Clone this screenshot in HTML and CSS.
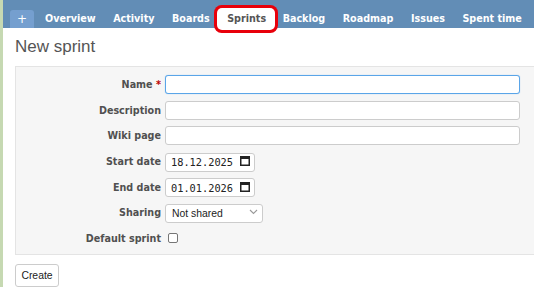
FILE: index.html
```html
<!DOCTYPE html>
<html lang="en">
<head>
  <meta charset="UTF-8" />
  <title>New sprint</title>
  <link rel="stylesheet" href="styles.css">
</head>
<body>

  <div class="page">
    <div class="main-menu">
      <ul class="tabs">
        <li class="tab new-object">+</li>
        <li class="tab">Overview</li>
        <li class="tab">Activity</li>
        <li class="tab">Boards</li>
        <li class="tab selected">Sprints</li>
        <li class="tab">Backlog</li>
        <li class="tab">Roadmap</li>
        <li class="tab">Issues</li>
        <li class="tab">Spent time</li>
      </ul>
    </div>

    <div class="content">
      <h2>New sprint</h2>

      <form class="box tabular">
        <label for="sprint-name">Name <span class="required">*</span></label>
        <input type="text" id="sprint-name" class="wide name-field" />

        <label for="description">Description</label>
        <input type="text" id="description" class="wide" />

        <label for="wiki">Wiki page</label>
        <input type="text" id="wiki" class="wide" />

        <label for="start">Start date</label>
        <div class="date-field">
          <input type="text" id="start" value="18.12.2025" />
          <svg class="cal-icon" width="10" height="11" viewBox="0 0 10 11">
            <rect x="0.75" y="1.75" width="8.5" height="8.5" fill="none" stroke="#222" stroke-width="1.5"/>
            <rect x="0" y="1" width="10" height="3" fill="#222"/>
          </svg>
        </div>

        <label for="end">End date</label>
        <div class="date-field">
          <input type="text" id="end" value="01.01.2026" />
          <svg class="cal-icon" width="10" height="11" viewBox="0 0 10 11">
            <rect x="0.75" y="1.75" width="8.5" height="8.5" fill="none" stroke="#222" stroke-width="1.5"/>
            <rect x="0" y="1" width="10" height="3" fill="#222"/>
          </svg>
        </div>

        <label for="sharing">Sharing</label>
        <div class="select-field">
          <select id="sharing">
            <option>Not shared</option>
          </select>
          <svg class="chevron" width="9" height="6" viewBox="0 0 9 6">
            <path d="M1 1 L4.5 4.5 L8 1" fill="none" stroke="#999" stroke-width="1.1"/>
          </svg>
        </div>

        <label for="default">Default sprint</label>
        <div><input type="checkbox" id="default" class="check" /></div>
      </form>

      <button type="button" class="create">Create</button>
    </div>
  </div>

</body>
</html>
```

FILE: styles.css
```css
/* Reset */
* {
  margin: 0;
  padding: 0;
  box-sizing: border-box;
}

body {
  background: #fff;
  border-left: 3px solid #c6d9b2;
  overflow: hidden;
  font-family: 'DejaVu Sans', Verdana, sans-serif;
  color: #333;
}

.page {
  width: 580px;
}

/* Top menu bar */
.main-menu {
  background: #628db6;
  height: 28px;
  padding-left: 7px;
  display: flex;
  align-items: flex-end;
}

.tabs {
  list-style: none;
  display: flex;
  align-items: flex-end;
  gap: 1.5px;
}

.tab {
  height: 18px;
  line-height: 18px;
  padding: 0 8px;
  font-size: 9.6px;
  font-weight: bold;
  color: #fff;
  border-radius: 3px 3px 0 0;
  white-space: nowrap;
}

.tab.new-object {
  background: #759fcf;
  font-size: 12px;
  font-weight: normal;
  padding: 0 7px;
  margin-right: 1.5px;
}

/* selected tab, with the red highlight frame around it */
.tab.selected {
  position: relative;
  z-index: 1;
  background: #fff;
  color: #555;
  border-radius: 3px;
  padding: 0 7px 0 8px;
  box-shadow: 0 0 0 2px #fff, 0 0 0 5px #e8000b;
}

/* Page content */
.content {
  padding: 9px 0 0 12px;
}

h2 {
  font-family: 'Liberation Sans', Arial, sans-serif;
  font-size: 17px;
  line-height: 20px;
  font-weight: normal;
  color: #555;
  margin-bottom: 9px;
}

.box {
  background: #f6f6f6;
  border: 1px solid #e4e4e4;
  padding: 5px 0 3px 0;
}

.tabular {
  display: grid;
  grid-template-columns: 145px auto;
  grid-auto-rows: 25.6px;
  column-gap: 4px;
  align-items: center;
}

.tabular label {
  text-align: right;
  font-size: 9.6px;
  font-weight: bold;
  color: #505050;
  white-space: nowrap;
}

.required {
  color: #bb0000;
}

input[type="text"],
select {
  height: 19px;
  border: 1px solid #ccc;
  border-radius: 3px;
  background: #fff;
  outline: none;
}

input.wide {
  width: 355px;
}

/* the name field has the blue "active" border */
.tabular input.name-field {
  border-color: #5aa5e8;
  box-shadow: 0 0 1px #8cc0ee;
}

/* Date inputs */
.date-field {
  position: relative;
  width: 90px;
}

.date-field input {
  width: 90px;
  padding: 0 0 0 5px;
  font-family: 'DejaVu Sans Mono', monospace;
  font-size: 10.3px;
  color: #222;
}

.cal-icon {
  position: absolute;
  left: 75px;
  top: 4px;
}

/* Select */
.select-field {
  position: relative;
  width: 98px;
}

.select-field select {
  appearance: none;
  width: 98px;
  padding: 0 0 0 6px;
  font-family: 'Liberation Sans', Arial, sans-serif;
  font-size: 10.4px;
  color: #222;
}

.chevron {
  position: absolute;
  left: 84px;
  top: 7px;
}

.check {
  appearance: none;
  display: block;
  width: 10px;
  height: 10px;
  margin-left: 3px;
  border: 1px solid #767676;
  border-radius: 2px;
  background: #fff;
}

.create {
  margin-top: 9px;
  width: 44px;
  height: 23px;
  background: #fff;
  border: 1px solid #ccc;
  border-radius: 3px;
  font-family: 'Liberation Sans', Arial, sans-serif;
  font-size: 10.4px;
  color: #222;
}
```
